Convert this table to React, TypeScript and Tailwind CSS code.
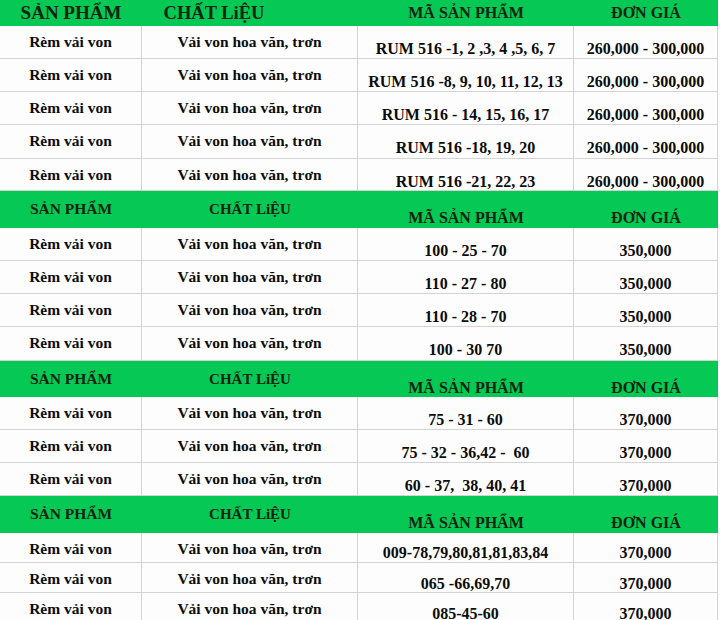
import React from "react"

type Row = { h: number; low: number; cells: [string, string, string, string] }
type Section = { h: number; first?: boolean; rows: Row[] }

const R = "Rèm vải von"
const V = "Vải von hoa văn, trơn"

const sections: Section[] = [
  {
    h: 26,
    first: true,
    rows: [
      { h: 33, low: 13, cells: [R, V, "RUM 516 -1, 2 ,3, 4 ,5, 6, 7", "260,000 - 300,000"] },
      { h: 33, low: 13, cells: [R, V, "RUM 516 -8, 9, 10, 11, 12, 13", "260,000 - 300,000"] },
      { h: 33, low: 13, cells: [R, V, "RUM 516 - 14, 15, 16, 17", "260,000 - 300,000"] },
      { h: 34, low: 13, cells: [R, V, "RUM 516 -18, 19, 20", "260,000 - 300,000"] },
      { h: 32, low: 13, cells: [R, V, "RUM 516 -21, 22, 23", "260,000 - 300,000"] },
    ],
  },
  {
    h: 37,
    rows: [
      { h: 33, low: 13, cells: [R, V, "100 - 25 - 70", "350,000"] },
      { h: 33, low: 13, cells: [R, V, "110 - 27 - 80", "350,000"] },
      { h: 33, low: 13, cells: [R, V, "110 - 28 - 70", "350,000"] },
      { h: 34, low: 13, cells: [R, V, "100 - 30 70", "350,000"] },
    ],
  },
  {
    h: 36,
    rows: [
      { h: 33, low: 13, cells: [R, V, "75 - 31 - 60", "370,000"] },
      { h: 33, low: 13, cells: [R, V, "75 - 32 - 36,42 -  60", "370,000"] },
      { h: 33, low: 13, cells: [R, V, "60 - 37,  38, 40, 41", "370,000"] },
    ],
  },
  {
    h: 37,
    rows: [
      { h: 30, low: 10, cells: [R, V, "009-78,79,80,81,81,83,84", "370,000"] },
      { h: 30, low: 11, cells: [R, V, "065 -66,69,70", "370,000"] },
      { h: 30, low: 11, cells: [R, V, "085-45-60", "370,000"] },
    ],
  },
]

const widths = ["w-[142px]", "w-[216px]", "w-[216px]", "w-[144px]"]

function Header({ s }: { s: Section }) {
  if (s.first) {
    return (
      <div className="flex h-[26px] bg-[#05c954] text-[#0a2410]">
        <div className="w-[142px] text-center text-[19px] leading-[26px]">SẢN PHẨM</div>
        <div className="w-[216px] pr-[72px] text-center text-[18.5px] leading-[26px]">CHẤT LiỆU</div>
        <div className="w-[216px] text-center text-[16px] leading-[26px]">MÃ SẢN PHẨM</div>
        <div className="w-[144px] text-center text-[16px] leading-[26px]">ĐƠN GIÁ</div>
      </div>
    )
  }
  return (
    <div className="flex bg-[#05c954] text-[#0a2410]" style={{ height: s.h }}>
      <div className="w-[142px] pt-[8px] text-center text-[15.5px] leading-[20px]">SẢN PHẨM</div>
      <div className="w-[216px] pt-[8px] text-center text-[15px] leading-[20px]">CHẤT LiỆU</div>
      <div className="w-[216px] pt-[17px] text-center text-[16px] leading-[20px]">MÃ SẢN PHẨM</div>
      <div className="w-[144px] pt-[17px] text-center text-[16px] leading-[20px]">ĐƠN GIÁ</div>
    </div>
  )
}

export default function App() {
  return (
    <div className="h-[620px] w-[723px] overflow-hidden bg-white font-['Liberation_Serif',serif] font-bold">
      <div className="w-[718px]">
        {sections.map((s, i) => (
          <div key={i}>
            <Header s={s} />
            {s.rows.map((r, j) => (
              <div key={j} className="flex bg-[#fdfdfd] text-[#0c0c0c]" style={{ height: r.h }}>
                {r.cells.map((c, k) => (
                  <div
                    key={k}
                    className={`${widths[k]} whitespace-pre border-r border-b border-[#d3d3d3] text-center leading-[20px] ${
                      k < 2 ? "text-[15.5px]" : "text-[16px]"
                    }`}
                    style={{ paddingTop: k < 2 ? 6 : r.low }}
                  >
                    {c}
                  </div>
                ))}
              </div>
            ))}
          </div>
        ))}
      </div>
    </div>
  )
}
